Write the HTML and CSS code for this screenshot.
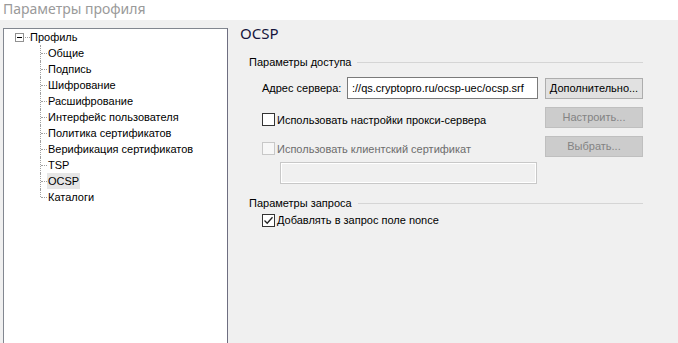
FILE: index.html
```html
<!DOCTYPE html>
<html lang="ru">
<head>
  <meta charset="UTF-8" />
  <title>Параметры профиля</title>
  <link rel="stylesheet" href="styles.css">
</head>
<body>

  <div class="titlebar">Параметры профиля</div>

  <div class="main">
    <!-- Tree -->
    <div class="tree">
      <div class="root">
        <span class="expander"></span>
        <span class="root-dots"></span>
        <span class="root-label">Профиль</span>
      </div>
      <ul class="children">
        <li><span>Общие</span></li>
        <li><span>Подпись</span></li>
        <li><span>Шифрование</span></li>
        <li><span>Расшифрование</span></li>
        <li><span>Интерфейс пользователя</span></li>
        <li><span>Политика сертификатов</span></li>
        <li><span>Верификация сертификатов</span></li>
        <li><span>TSP</span></li>
        <li class="selected"><span>OCSP</span></li>
        <li><span>Каталоги</span></li>
      </ul>
    </div>

    <!-- Page -->
    <div class="page">
      <div class="page-title">OCSP</div>

      <div class="group">
        <div class="group-title"><span>Параметры доступа</span></div>
        <div class="group-body">
          <div class="row">
            <span class="label">Адрес сервера:</span>
            <div class="textbox">://qs.cryptopro.ru/ocsp-uec/ocsp.srf</div>
            <button class="btn">Дополнительно...</button>
          </div>
          <div class="row check-row">
            <span class="check"></span>
            <span class="check-label">Использовать настройки прокси-сервера</span>
            <button class="btn" disabled>Настроить...</button>
          </div>
          <div class="row check-row">
            <span class="check disabled"></span>
            <span class="check-label disabled">Использовать клиентский сертификат</span>
            <button class="btn" disabled>Выбрать...</button>
          </div>
          <div class="textbox empty"></div>
        </div>
      </div>

      <div class="group second">
        <div class="group-title"><span>Параметры запроса</span></div>
        <div class="group-body">
          <div class="row small">
            <span class="check">
              <svg width="11" height="11" viewBox="0 0 11 11"><path d="M1.5 5.5 L4.2 8.2 L9.5 2.2" fill="none" stroke="#222" stroke-width="1.3"/></svg>
            </span>
            <span class="check-label">Добавлять в запрос поле nonce</span>
          </div>
        </div>
      </div>
    </div>
  </div>

</body>
</html>
```

FILE: styles.css
```css
:root {
  --panel: #f0f0f0;
  --text: #000;
  --gray-text: #6d6d6d;
  --font: "Liberation Sans", Arial, sans-serif;
}

body {
  margin: 0;
  width: 678px;
  height: 343px;
  overflow: hidden;
  background: var(--panel);
  font-family: var(--font);
  font-size: 11px;
  color: var(--text);
}

.titlebar {
  height: 20px;
  background: #fff;
  color: #9a9a9a;
  font-family: "Noto Sans", sans-serif;
  font-size: 14px;
  line-height: 17px;
  padding-left: 3px;
  white-space: nowrap;
}

.main {
  display: flex;
  align-items: flex-start;
}

/* Tree */
.tree {
  margin: 8px 0 0 3px;
  width: 223px;
  height: 330px;
  background: #fff;
  border: 1px solid #828790;
  border-right-color: #6e6e80;
}

.root {
  display: flex;
  align-items: center;
  height: 16px;
  padding-left: 11px;
}

.expander {
  position: relative;
  width: 7px;
  height: 7px;
  border: 1px solid #919191;
  background: #fff;
}

.expander::after {
  content: "";
  position: absolute;
  left: 1px;
  top: 3px;
  width: 5px;
  height: 1px;
  background: #000;
}

.root-dots {
  width: 5px;
  margin-left: 1px;
  border-top: 1px dotted #a0a0a0;
}

.root-label {
  line-height: 16px;
}

.children {
  list-style: none;
  margin: 0 0 0 36px;
  padding: 0;
}

.children li {
  position: relative;
  height: 16px;
  line-height: 16px;
  padding-left: 7px;
  white-space: nowrap;
}

.children li::before {
  content: "";
  position: absolute;
  left: 0;
  top: 0;
  bottom: 0;
  border-left: 1px dotted #a0a0a0;
}

.children li:last-child::before {
  bottom: 8px;
}

.children li::after {
  content: "";
  position: absolute;
  left: 1px;
  top: 8px;
  width: 6px;
  border-top: 1px dotted #a0a0a0;
}

.children li span {
  display: inline-block;
  padding: 0 1px;
}

.children li.selected span {
  background: #e6e6e6;
}

/* Page */
.page {
  width: 402px;
  margin-left: 13px;
  padding-top: 3px;
}

.page-title {
  font-family: "Noto Sans", sans-serif;
  font-size: 15px;
  line-height: 20px;
  color: #14143c;
  margin-left: -1px;
}

.group {
  margin: 11px 0 0 8px;
}

.group.second {
  margin-top: 11px;
}

.group-title {
  display: flex;
  align-items: center;
  height: 16px;
  white-space: nowrap;
}

.group-title::after {
  content: "";
  flex: 1;
  height: 1px;
  margin-left: 6px;
  background: #d5d5d5;
}

.group-body {
  padding-left: 13px;
  padding-top: 7px;
  display: flex;
  flex-direction: column;
  gap: 7px;
}

.row {
  display: flex;
  align-items: center;
  height: 22px;
  white-space: nowrap;
}

.check-row .check,
.check-row .check-label {
  margin-top: 5px;
}

.row.small {
  height: 16px;
  margin-top: -6px;
}

.label {
  width: 85px;
}

.textbox {
  box-sizing: border-box;
  width: 191px;
  height: 22px;
  line-height: 20px;
  padding-left: 4px;
  background: #fff;
  border: 1px solid #7a7a7a;
  white-space: nowrap;
  overflow: hidden;
}

.textbox.empty {
  width: 257px;
  margin: -2px 0 0 18px;
  background: var(--panel);
  border: 1px solid #c8c8c8;
  box-shadow: inset 0 0 0 1px #fff;
}

.btn {
  box-sizing: border-box;
  margin-left: auto;
  width: 98px;
  height: 21px;
  padding: 0;
  font-family: var(--font);
  font-size: 11px;
  color: #000;
  background: #e1e1e1;
  border: 1px solid #adadad;
}

.btn:disabled {
  background: #cccccc;
  border-color: #bfbfbf;
  color: #838383;
}

.check {
  box-sizing: border-box;
  display: flex;
  align-items: center;
  justify-content: center;
  width: 13px;
  height: 13px;
  background: #fff;
  border: 1px solid #333;
}

.check.disabled {
  background: #f7f7f7;
  border-color: #c8c8c8;
}

.check-label {
  margin-left: 2px;
}

.check-label.disabled {
  color: var(--gray-text);
}
```
